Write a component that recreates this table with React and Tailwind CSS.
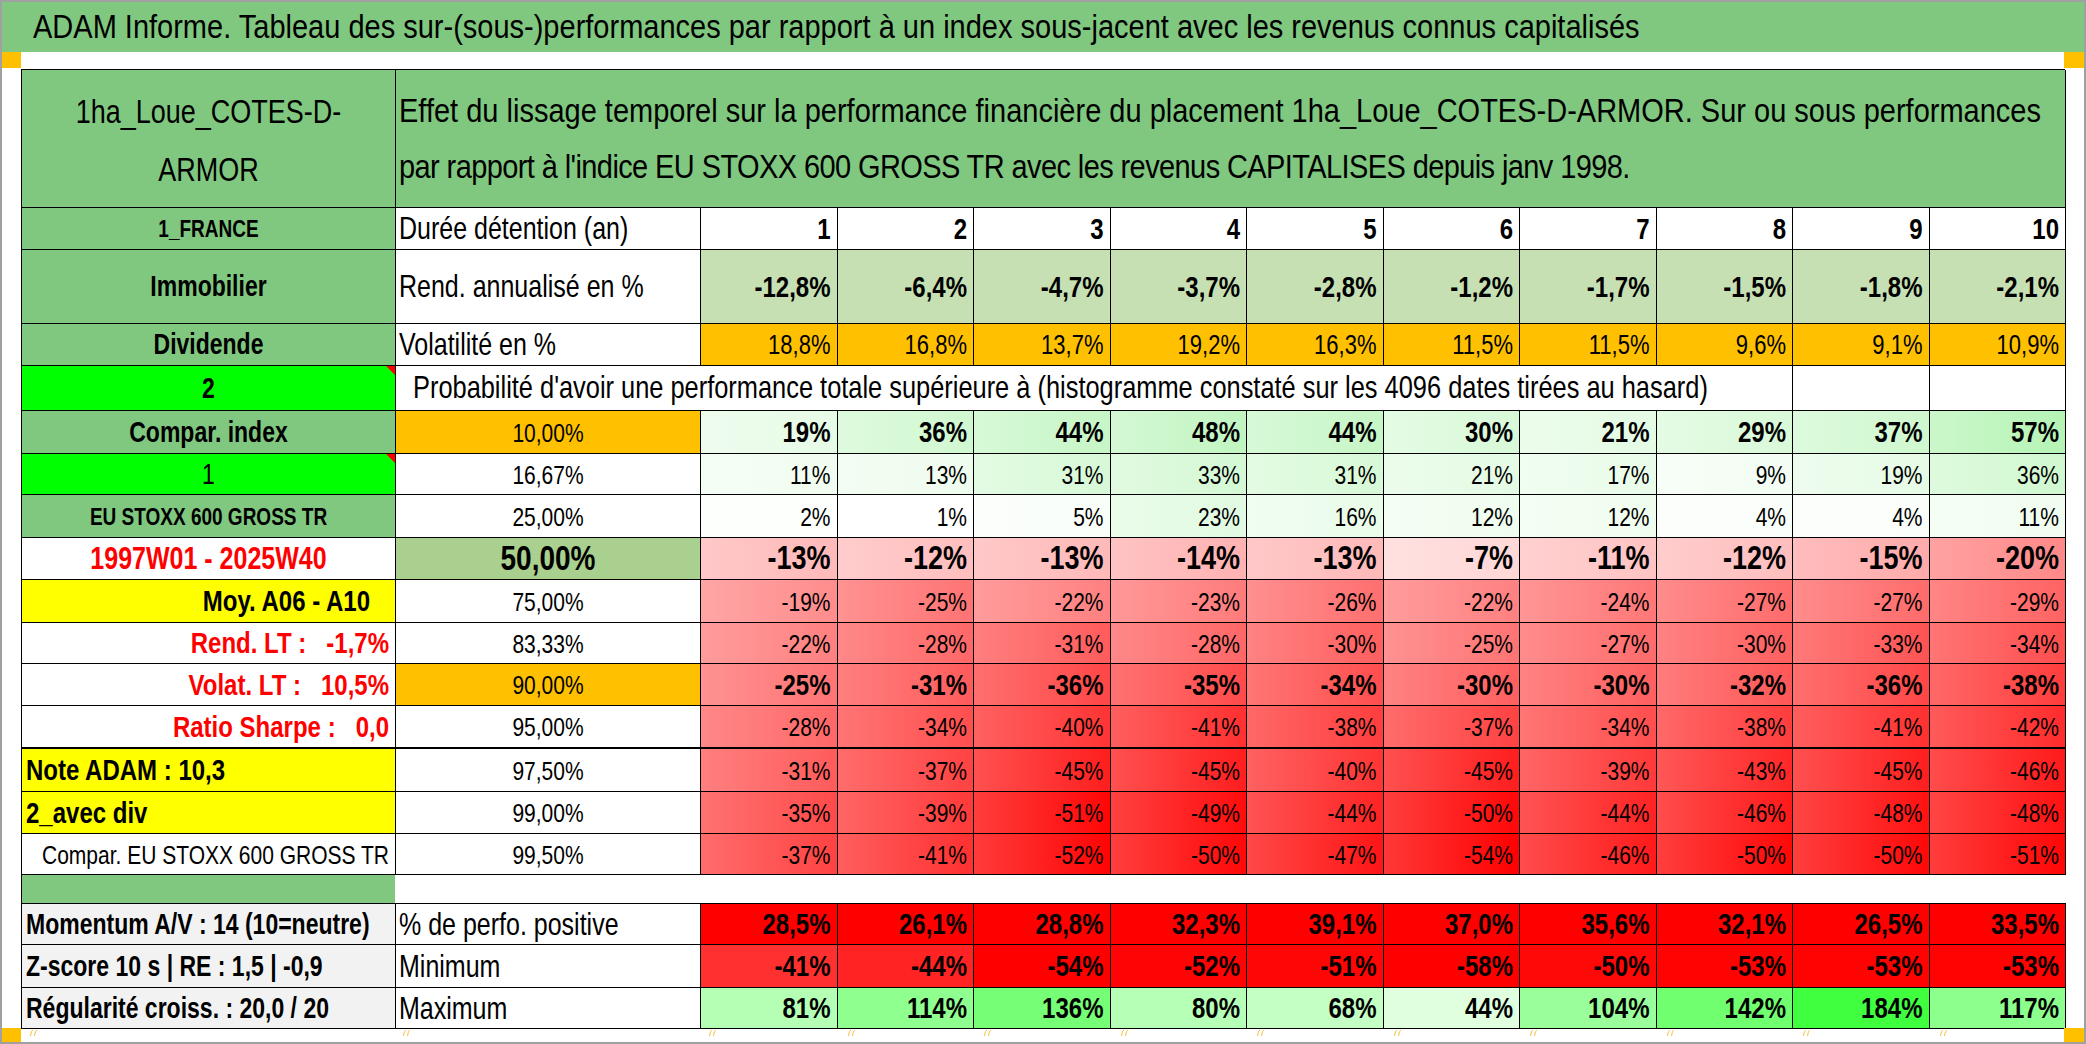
import React from "react";

const GREEN = "bg-[#80c880]";

const RED_ANCH = [[0,255],[7,215],[13,185],[19,140],[25,115],[30,95],[36,70],[41,48],[45,30],[50,8],[54,0]];
function lerp(anch, x) {
  if (x <= anch[0][0]) return anch[0][1];
  for (let i = 1; i < anch.length; i++) {
    if (x <= anch[i][0]) {
      const [x0, y0] = anch[i - 1];
      const [x1, y1] = anch[i];
      return y0 + ((y1 - y0) * (x - x0)) / (x1 - x0);
    }
  }
  return anch[anch.length - 1][1];
}
function redBg(v) {
  const g = Math.round(lerp(RED_ANCH, v));
  const gl = Math.round(g + (255 - g) * 0.22);
  return { background: `linear-gradient(to right, rgb(255,${gl},${gl}), rgb(255,${g},${g}))` };
}
function greenBg(v) {
  const t = Math.min(v / 60, 1);
  const rb = Math.round(255 - 78 * t);
  const g = Math.round(255 - 12 * t);
  const rbl = Math.round(rb + (255 - rb) * 0.3);
  const gll = Math.round(g + (255 - g) * 0.3);
  return { background: `linear-gradient(to right, rgb(${rbl},${gll},${rbl}), rgb(${rb},${g},${rb}))` };
}
function maxBg(v) {
  const t = (v - 44) / 140;
  const rb = Math.round(223 - 160 * t);
  return { background: `rgb(${rb},255,${rb})` };
}

const rend = ["-12,8%", "-6,4%", "-4,7%", "-3,7%", "-2,8%", "-1,2%", "-1,7%", "-1,5%", "-1,8%", "-2,1%"];
const vol = ["18,8%", "16,8%", "13,7%", "19,2%", "16,3%", "11,5%", "11,5%", "9,6%", "9,1%", "10,9%"];
const compar = [19, 36, 44, 48, 44, 30, 21, 29, 37, 57];
const r1 = [11, 13, 31, 33, 31, 21, 17, 9, 19, 36];
const eu = [2, 1, 5, 23, 16, 12, 12, 4, 4, 11];
const r1997 = [13, 12, 13, 14, 13, 7, 11, 12, 15, 20];
const moy = [19, 25, 22, 23, 26, 22, 24, 27, 27, 29];
const rendlt = [22, 28, 31, 28, 30, 25, 27, 30, 33, 34];
const volat = [25, 31, 36, 35, 34, 30, 30, 32, 36, 38];
const ratio = [28, 34, 40, 41, 38, 37, 34, 38, 41, 42];
const note = [31, 37, 45, 45, 40, 45, 39, 43, 45, 46];
const avec = [35, 39, 51, 49, 44, 50, 44, 46, 48, 48];
const comparEU = [37, 41, 52, 50, 47, 54, 46, 50, 50, 51];
const pos = ["28,5%", "26,1%", "28,8%", "32,3%", "39,1%", "37,0%", "35,6%", "32,1%", "26,5%", "33,5%"];
const mins = [41, 44, 54, 52, 51, 58, 50, 53, 53, 53];
const maxs = [81, 114, 136, 80, 68, 44, 104, 142, 184, 117];

function T({ children }) {
  return <span className="inline-block scale-y-[1.25]">{children}</span>;
}

function Row({ h, children }) {
  return <div className={`grid grid-cols-[374px_305px_repeat(10,136.5px)] ${h}`}>{children}</div>;
}

function D({ children, className = "", style }) {
  return (
    <div className={`flex items-center justify-end pr-[6px] border-r border-b border-black leading-none whitespace-nowrap ${className}`} style={style}>
      {children !== undefined && <T>{children}</T>}
    </div>
  );
}

function A({ children, className = "", tri = false }) {
  return (
    <div className={`relative flex items-center border-r border-b border-black leading-none whitespace-pre ${className}`}>
      <T>{children}</T>
      {tri && (
        <svg className="absolute top-0 right-0" width="9" height="9" viewBox="0 0 9 9">
          <polygon points="0,0 9,0 9,9" fill="#ff0000" />
        </svg>
      )}
    </div>
  );
}

function B({ children, className = "" }) {
  return (
    <div className={`flex items-center border-r border-b border-black leading-none whitespace-nowrap ${className}`}>
      <T>{children}</T>
    </div>
  );
}

function NegRow({ h, vals, cls, a, b, bClass = "text-[21px]", thick = false }) {
  return (
    <Row h={h}>
      {a}
      <B className={`justify-center ${bClass} ${thick ? "border-b-2" : ""}`}>{b}</B>
      {vals.map((v, i) => (
        <D key={i} className={`${cls} ${thick ? "border-b-2" : ""}`} style={redBg(v)}>
          -{v}%
        </D>
      ))}
    </Row>
  );
}

export default function App() {
  const colStarts = [29, 402, 708];
  for (let i = 1; i < 10; i++) colStarts.push(Math.round(700 + 136.5 * i + 10));
  return (
    <div className="relative w-[2086px] h-[1044px] overflow-hidden bg-white border-2 border-[#a0a0a0] text-black font-['Liberation_Sans',Arial,sans-serif]">
      <div className={`h-[50px] ${GREEN} flex items-center pl-[31px] text-[29px] leading-none whitespace-nowrap`}>
        <span className="inline-block scale-y-[1.12]">
          ADAM Informe. Tableau des sur-(sous-)performances par rapport à un index sous-jacent avec les revenus connus capitalisés
        </span>
      </div>
      <div className="h-[17px]" />
      <div className="ml-[19px] w-[2044px] border-l border-t border-black">
        <Row h="h-[138px]">
          <div className={`flex flex-col items-center justify-center pt-[4px] border-r border-b border-black ${GREEN} text-[27px] leading-[58px]`}>
            <span className="inline-block scale-y-[1.2]">1ha_Loue_COTES-D-</span>
            <span className="inline-block scale-y-[1.2]">ARMOR</span>
          </div>
          <div className={`col-span-11 flex flex-col justify-center pl-[3px] border-r border-b border-black ${GREEN} text-[29px] leading-[56px] whitespace-nowrap`}>
            <span className="inline-block scale-y-[1.12]">Effet du lissage temporel sur la performance financière du placement 1ha_Loue_COTES-D-ARMOR. Sur ou sous performances</span>
            <span className="inline-block scale-y-[1.12] tracking-[-0.6px]">par rapport à l'indice EU STOXX 600 GROSS TR avec les revenus CAPITALISES depuis janv 1998.</span>
          </div>
        </Row>

        <Row h="h-[42px]">
          <A className={`${GREEN} justify-center font-bold text-[19px]`}>1_FRANCE</A>
          <B className="pl-[3px] text-[25px]">Durée détention (an)</B>
          {Array.from({ length: 10 }, (_, i) => (
            <D key={i} className="justify-center pr-0 font-bold text-[24px]">{i + 1}</D>
          ))}
        </Row>

        <Row h="h-[74px]">
          <A className={`${GREEN} justify-center font-bold text-[23px]`}>Immobilier</A>
          <B className="pl-[3px] text-[25px]">Rend. annualisé en %</B>
          {rend.map((v, i) => (
            <D key={i} className="bg-[#c6e0b4] font-bold text-[24px]">{v}</D>
          ))}
        </Row>

        <Row h="h-[42px]">
          <A className={`${GREEN} justify-center font-bold text-[23px]`}>Dividende</A>
          <B className="pl-[3px] text-[25px]">Volatilité en %</B>
          {vol.map((v, i) => (
            <D key={i} className="bg-[#ffc000] text-[22px]">{v}</D>
          ))}
        </Row>

        <Row h="h-[45px]">
          <A className="bg-[#00ff00] justify-center font-bold text-[23px]" tri>2</A>
          <div className="col-span-9 flex items-center pl-[17px] border-r border-b border-black text-[25.4px] leading-none whitespace-nowrap">
            <T>Probabilité d'avoir une performance totale supérieure à (histogramme constaté sur les 4096 dates tirées au hasard)</T>
          </div>
          <D />
          <D />
        </Row>

        <Row h="h-[43px]">
          <A className={`${GREEN} justify-center font-bold text-[23px]`}>Compar. index</A>
          <B className="justify-center bg-[#ffc000] text-[21px]">10,00%</B>
          {compar.map((v, i) => (
            <D key={i} className="font-bold text-[24px]" style={greenBg(v)}>{v}%</D>
          ))}
        </Row>

        <Row h="h-[41px]">
          <A className="bg-[#00ff00] justify-center text-[23px]" tri>1</A>
          <B className="justify-center text-[21px]">16,67%</B>
          {r1.map((v, i) => (
            <D key={i} className="text-[21px]" style={greenBg(v)}>{v}%</D>
          ))}
        </Row>

        <Row h="h-[43px]">
          <A className={`${GREEN} justify-center font-bold text-[19px]`}>EU STOXX 600 GROSS TR</A>
          <B className="justify-center text-[21px]">25,00%</B>
          {eu.map((v, i) => (
            <D key={i} className="text-[21px]" style={greenBg(v)}>{v}%</D>
          ))}
        </Row>

        <NegRow
          h="h-[42px]"
          vals={r1997}
          cls="font-bold text-[27px]"
          a={<A className="bg-white justify-center font-bold text-[25px] text-[#ff0000]">1997W01 - 2025W40</A>}
          b="50,00%"
          bClass="bg-[#a9d08e] text-[28px] font-bold"
        />
        <NegRow
          h="h-[43px]"
          vals={moy}
          cls="text-[21px]"
          a={<A className="bg-[#ffff00] justify-end pr-[25px] font-bold text-[24px]">Moy. A06 - A10</A>}
          b="75,00%"
        />
        <NegRow
          h="h-[41px]"
          vals={rendlt}
          cls="text-[21px]"
          a={<A className="bg-white justify-end pr-[6px] font-bold text-[24px] text-[#ff0000]">Rend. LT :   -1,7%</A>}
          b="83,33%"
        />
        <NegRow
          h="h-[42px]"
          vals={volat}
          cls="font-bold text-[24px]"
          a={<A className="bg-white justify-end pr-[6px] font-bold text-[24px] text-[#ff0000]">Volat. LT :   10,5%</A>}
          b="90,00%"
          bClass="bg-[#ffc000] text-[21px]"
        />
        <NegRow
          h="h-[43px]"
          vals={ratio}
          cls="text-[21px]"
          thick
          a={<A className="bg-white justify-end pr-[6px] font-bold text-[24px] text-[#ff0000] border-b-2">Ratio Sharpe :   0,0</A>}
          b="95,00%"
        />
        <NegRow
          h="h-[43px]"
          vals={note}
          cls="text-[21px]"
          a={<A className="bg-[#ffff00] justify-start pl-[4px] font-bold text-[24px]">Note ADAM : 10,3</A>}
          b="97,50%"
        />
        <NegRow
          h="h-[42px]"
          vals={avec}
          cls="text-[21px]"
          a={<A className="bg-[#ffff00] justify-start pl-[4px] font-bold text-[24px]">2_avec div</A>}
          b="99,00%"
        />
        <NegRow
          h="h-[41px]"
          vals={comparEU}
          cls="text-[21px]"
          a={<A className="bg-white justify-end pr-[6px] text-[21px]">Compar. EU STOXX 600 GROSS TR</A>}
          b="99,50%"
        />

        <div className="grid grid-cols-[374px_1670px] h-[28px] -ml-px">
          <div className={`${GREEN} border-l border-black`} />
          <div className="bg-white" />
        </div>

        <Row h="h-[42px]">
          <A className="bg-[#f2f2f2] border-t justify-start pl-[4px] font-bold text-[23px]">Momentum A/V : 14 (10=neutre)</A>
          <B className="border-t pl-[3px] text-[25px]">% de perfo. positive</B>
          {pos.map((v, i) => (
            <D key={i} className="border-t bg-[#ff0000] font-bold text-[24px]">{v}</D>
          ))}
        </Row>
        <Row h="h-[43px]">
          <A className="bg-[#f2f2f2] justify-start pl-[4px] font-bold text-[23px]">Z-score 10 s | RE : 1,5 | -0,9</A>
          <B className="pl-[3px] text-[25px]">Minimum</B>
          {mins.map((v, i) => (
            <D key={i} className="font-bold text-[24px]" style={{ background: `rgb(255,${Math.round(lerp(RED_ANCH, v))},${Math.round(lerp(RED_ANCH, v))})` }}>-{v}%</D>
          ))}
        </Row>
        <Row h="h-[41px]">
          <A className="bg-[#f2f2f2] justify-start pl-[4px] font-bold text-[23px]">Régularité croiss. : 20,0 / 20</A>
          <B className="pl-[3px] text-[25px]">Maximum</B>
          {maxs.map((v, i) => (
            <D key={i} className="font-bold text-[24px]" style={maxBg(v)}>{v}%</D>
          ))}
        </Row>
      </div>

      <div className="absolute left-[-2px] top-[50px] w-[21px] h-[16px] bg-[#ffc000]" />
      <div className="absolute right-[-2px] top-[50px] w-[22px] h-[16px] bg-[#ffc000]" />
      <div className="absolute left-[-2px] top-[1026px] w-[21px] h-[14px] bg-[#ffc000]" />
      <div className="absolute right-[-2px] top-[1026px] w-[22px] h-[14px] bg-[#ffc000]" />

      {colStarts.map((x, i) => (
        <svg key={i} className="absolute top-[1027px]" style={{ left: x - 2 }} width="10" height="8" viewBox="0 0 10 8">
          <path d="M1.5 7 Q2 1.5 4 1" stroke="#f0c040" strokeWidth="1" fill="none" />
          <path d="M5.5 7 Q6 1.5 8 1" stroke="#f0c040" strokeWidth="1" fill="none" />
        </svg>
      ))}
    </div>
  );
}
